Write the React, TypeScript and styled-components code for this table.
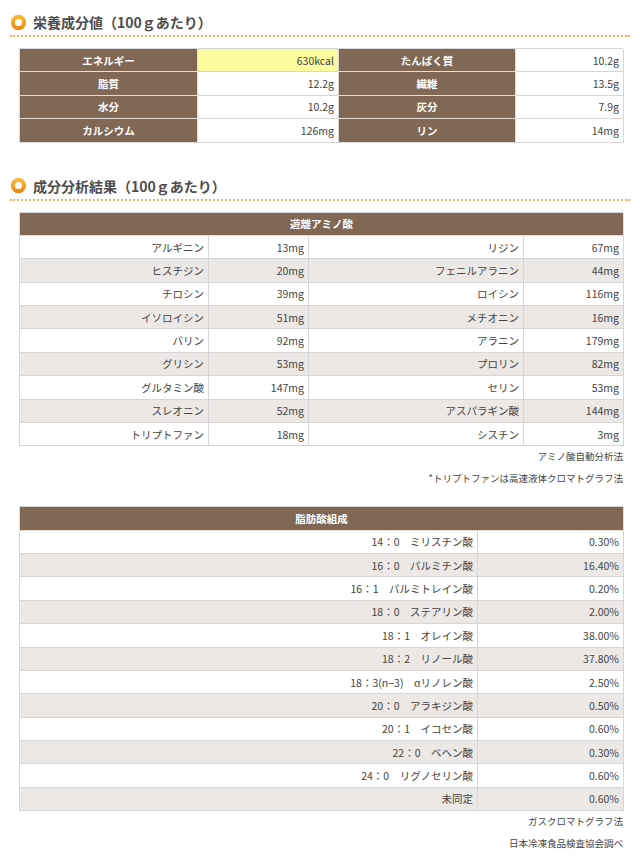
import React from "react";
import styled, { createGlobalStyle } from "styled-components";

const Global = createGlobalStyle`
  html, body { margin: 0; padding: 0; background: #fff; }
  body { font-family: "Noto Sans CJK JP", "Noto Sans", sans-serif; color: #444; }
`;

const Page = styled.div`
  padding: 9px 10px 0 10px;
  width: 640px;
  box-sizing: border-box;
`;

const Section = styled.section<{ $gap?: number }>`
  margin-top: ${(p) => p.$gap ?? 0}px;
`;

const Heading = styled.h2`
  margin: 0;
  height: 26px;
  display: flex;
  align-items: center;
  gap: 6px;
  border-bottom: 2px dotted #e2b35c;
  font-size: 14px;
  font-weight: 700;
  color: #4d4d4d;
`;

const Body = styled.div`
  margin: 11px 0 0 9px;
  width: 604px;
`;

const Grid = styled.div<{ $cols: string }>`
  display: grid;
  grid-template-columns: ${(p) => p.$cols};
  grid-auto-rows: 23.375px;
  border-top: 1px solid #d6d6d6;
  border-left: 1px solid #d6d6d6;
  box-sizing: border-box;
`;

const Cell = styled.div<{ $kind?: "label" | "value" | "hl" | "head"; $alt?: boolean }>`
  box-sizing: border-box;
  display: flex;
  align-items: center;
  justify-content: ${(p) =>
    p.$kind === "label" || p.$kind === "head" ? "center" : "flex-end"};
  padding: 0 4px;
  font-size: 10.5px;
  white-space: nowrap;
  border-right: 1px solid
    ${(p) => (p.$kind === "label" || p.$kind === "head" ? "#e4ddd6" : "#d6d6d6")};
  border-bottom: 1px solid
    ${(p) => (p.$kind === "label" || p.$kind === "head" ? "#e4ddd6" : "#d6d6d6")};
  background: ${(p) =>
    p.$kind === "label" || p.$kind === "head"
      ? "#806854"
      : p.$kind === "hl"
      ? "#fdfb9f"
      : p.$alt
      ? "#ebe8e5"
      : "#fff"};
  color: ${(p) => (p.$kind === "label" || p.$kind === "head" ? "#fff" : "#444")};
  font-weight: ${(p) => (p.$kind === "label" || p.$kind === "head" ? 700 : 400)};
  grid-column: ${(p) => (p.$kind === "head" ? "1 / -1" : "auto")};
`;

const Notes = styled.div<{ $after?: number }>`
  text-align: right;
  font-size: 9.5px;
  line-height: 21.5px;
  color: #444;
  margin-bottom: ${(p) => p.$after ?? 0}px;
`;

const Ring = () => (
  <svg width="17" height="17" viewBox="0 0 17 17" style={{ flex: "none" }}>
    <defs>
      <linearGradient id="rg" x1="0" y1="0" x2="0" y2="1">
        <stop offset="0" stopColor="#f8b93a" />
        <stop offset="1" stopColor="#ec8d14" />
      </linearGradient>
    </defs>
    <circle cx="8.5" cy="8.5" r="5.6" fill="#fff" stroke="url(#rg)" strokeWidth="4.2" />
  </svg>
);

const nutrition: [string, string, boolean, string, string][] = [
  ["エネルギー", "630kcal", true, "たんぱく質", "10.2g"],
  ["脂質", "12.2g", false, "繊維", "13.5g"],
  ["水分", "10.2g", false, "灰分", "7.9g"],
  ["カルシウム", "126mg", false, "リン", "14mg"],
];

const amino: [string, string, string, string][] = [
  ["アルギニン", "13mg", "リジン", "67mg"],
  ["ヒスチジン", "20mg", "フェニルアラニン", "44mg"],
  ["チロシン", "39mg", "ロイシン", "116mg"],
  ["イソロイシン", "51mg", "メチオニン", "16mg"],
  ["バリン", "92mg", "アラニン", "179mg"],
  ["グリシン", "53mg", "プロリン", "82mg"],
  ["グルタミン酸", "147mg", "セリン", "53mg"],
  ["スレオニン", "52mg", "アスパラギン酸", "144mg"],
  ["トリプトファン", "18mg", "シスチン", "3mg"],
];

const fats: [string, string][] = [
  ["14：0　ミリスチン酸", "0.30%"],
  ["16：0　パルミチン酸", "16.40%"],
  ["16：1　パルミトレイン酸", "0.20%"],
  ["18：0　ステアリン酸", "2.00%"],
  ["18：1　オレイン酸", "38.00%"],
  ["18：2　リノール酸", "37.80%"],
  ["18：3(n−3)　αリノレン酸", "2.50%"],
  ["20：0　アラキジン酸", "0.50%"],
  ["20：1　イコセン酸", "0.60%"],
  ["22：0　ベヘン酸", "0.30%"],
  ["24：0　リグノセリン酸", "0.60%"],
  ["未同定", "0.60%"],
];

export default function App() {
  return (
    <>
      <Global />
      <Page>
        <Section>
          <Heading>
            <Ring />
            栄養成分値（100ｇあたり）
          </Heading>
          <Body>
            <Grid $cols="178px 141px 177px 108px">
              {nutrition.map(([a, b, hl, c, d]) => (
                <React.Fragment key={a}>
                  <Cell $kind="label">{a}</Cell>
                  <Cell $kind={hl ? "hl" : "value"}>{b}</Cell>
                  <Cell $kind="label">{c}</Cell>
                  <Cell $kind="value">{d}</Cell>
                </React.Fragment>
              ))}
            </Grid>
          </Body>
        </Section>

        <Section $gap={30}>
          <Heading>
            <Ring />
            成分分析結果（100ｇあたり）
          </Heading>
          <Body>
            <Grid $cols="189px 100px 215px 100px">
              <Cell $kind="head">遊離アミノ酸</Cell>
              {amino.map(([a, b, c, d], i) => (
                <React.Fragment key={a}>
                  <Cell $alt={i % 2 === 1}>{a}</Cell>
                  <Cell $alt={i % 2 === 1}>{b}</Cell>
                  <Cell $alt={i % 2 === 1}>{c}</Cell>
                  <Cell $alt={i % 2 === 1}>{d}</Cell>
                </React.Fragment>
              ))}
            </Grid>
            <Notes $after={17}>
              <div>アミノ酸自動分析法</div>
              <div>*トリプトファンは高速液体クロマトグラフ法</div>
            </Notes>
            <Grid $cols="458px 146px">
              <Cell $kind="head">脂肪酸組成</Cell>
              {fats.map(([a, b], i) => (
                <React.Fragment key={a}>
                  <Cell $alt={i % 2 === 1}>{a}</Cell>
                  <Cell $alt={i % 2 === 1}>{b}</Cell>
                </React.Fragment>
              ))}
            </Grid>
            <Notes>
              <div>ガスクロマトグラフ法</div>
              <div>日本冷凍食品検査協会調べ</div>
            </Notes>
          </Body>
        </Section>
      </Page>
    </>
  );
}
